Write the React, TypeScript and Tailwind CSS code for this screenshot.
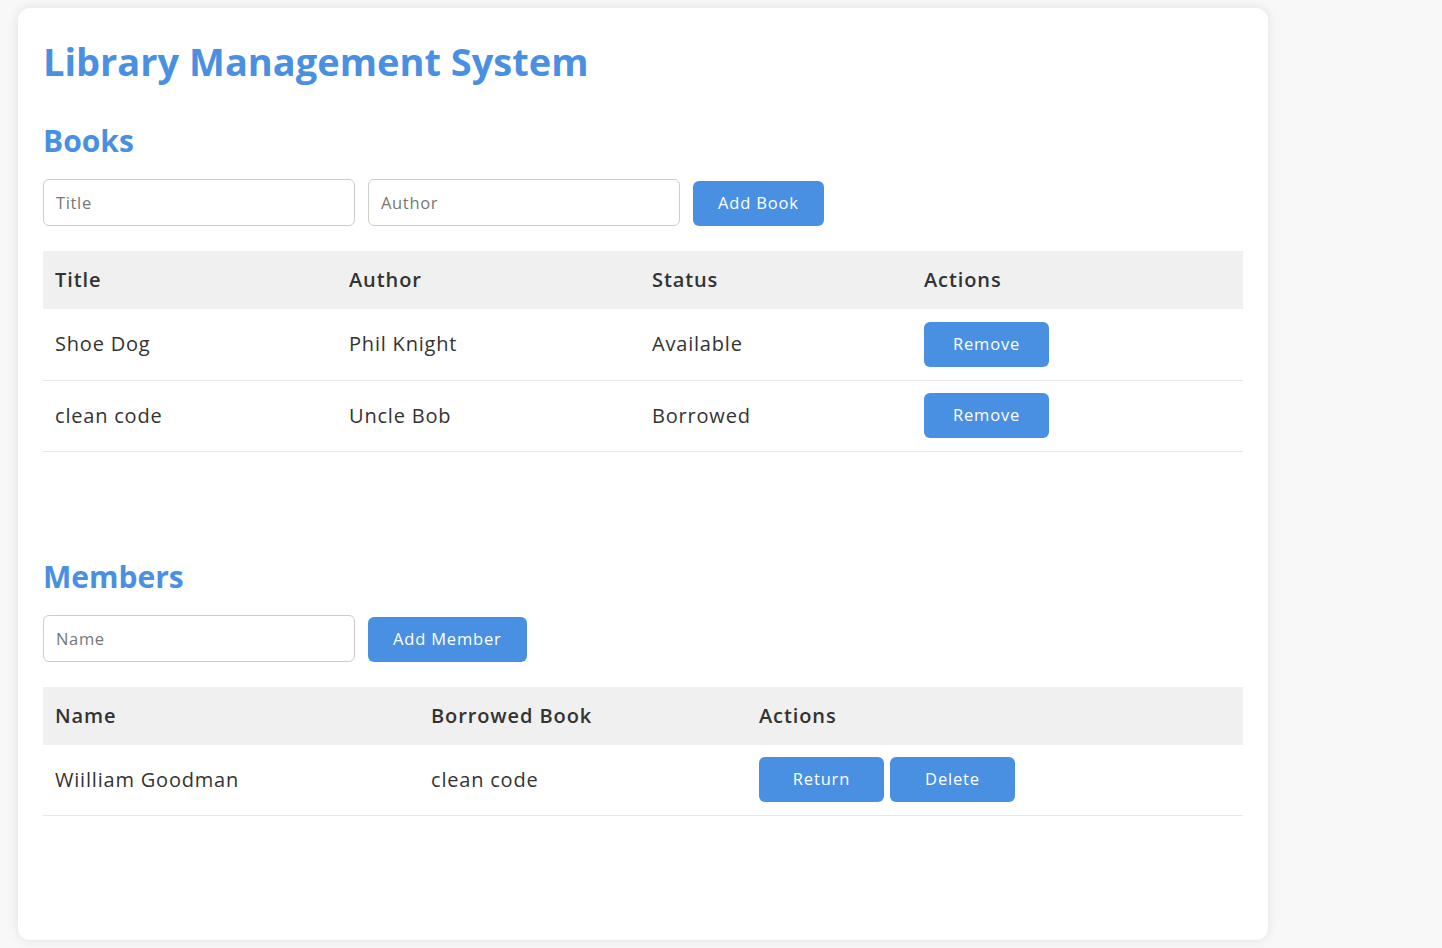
import React, { useState } from "react"

type Book = { title: string; author: string; status: 'Available' | 'Borrowed' }
type Member = { name: string; book: string }

const btn = "bg-[#4a90e2] text-white text-[16.5px] tracking-[0.05em] rounded-[6px] h-[45px] hover:bg-[#357abd]"
const field = "w-[312px] h-[47px] border border-[#ccc] rounded-[6px] px-[12px] text-[16.5px] tracking-[0.04em] placeholder:text-[#777] outline-none"

const App: React.FC = () => {
    const [books] = useState<Book[]>([
        { title: 'Shoe Dog', author: 'Phil Knight', status: 'Available' },
        { title: 'clean code', author: 'Uncle Bob', status: 'Borrowed' },
    ])
    const [members] = useState<Member[]>([
        { name: 'Wiilliam Goodman', book: 'clean code' },
    ])

    return (
        <div className="min-h-[948px] bg-[#f8f8f8] pt-[8px] pl-[18px] font-['Open_Sans',sans-serif] text-[#333] tracking-[0.05em]">
            <div className="w-[1250px] h-[932px] bg-white rounded-[12px] shadow-[0_0_12px_rgba(0,0,0,0.1)] px-[25px] pt-[30px]">
                <h1 className="text-[38px] leading-[46px] font-bold text-[#4a90e2] tracking-normal">Library Management System</h1>

                {/* books */}
                <h2 className="mt-[39px] text-[30px] leading-[36px] font-bold text-[#4a90e2] tracking-normal">Books</h2>
                <div className="mt-[20px] flex items-center gap-[13px]">
                    <input placeholder="Title" className={field} />
                    <input placeholder="Author" className={field} />
                    <button className={`${btn} px-[25px] mt-[2px]`}>Add Book</button>
                </div>
                <table className="mt-[25px] w-[1200px] border-collapse text-[20px]">
                    <thead>
                        <tr className="bg-[#f0f0f0] h-[58px]">
                            <th className="w-[294px] px-[12px] text-left font-semibold tracking-[0.045em]">Title</th>
                            <th className="w-[303px] px-[12px] text-left font-semibold tracking-[0.045em]">Author</th>
                            <th className="w-[272px] px-[12px] text-left font-semibold tracking-[0.045em]">Status</th>
                            <th className="px-[12px] text-left font-semibold tracking-[0.045em]">Actions</th>
                        </tr>
                    </thead>
                    <tbody>
                        {books.map((b) => (
                            <tr key={b.title} className="h-[71px] border-b border-[#e8e8e8]">
                                <td className="px-[12px]">{b.title}</td>
                                <td className="px-[12px]">{b.author}</td>
                                <td className="px-[12px]">{b.status}</td>
                                <td className="px-[12px]">
                                    <button className={`${btn} w-[125px]`}>Remove</button>
                                </td>
                            </tr>
                        ))}
                    </tbody>
                </table>

                {/* members */}
                <h2 className="mt-[107px] text-[30px] leading-[36px] font-bold text-[#4a90e2] tracking-normal">Members</h2>
                <div className="mt-[20px] flex items-center gap-[13px]">
                    <input placeholder="Name" className={field} />
                    <button className={`${btn} px-[25px] mt-[2px]`}>Add Member</button>
                </div>
                <table className="mt-[25px] w-[1200px] border-collapse text-[20px]">
                    <thead>
                        <tr className="bg-[#f0f0f0] h-[58px]">
                            <th className="w-[376px] px-[12px] text-left font-semibold tracking-[0.045em]">Name</th>
                            <th className="w-[328px] px-[12px] text-left font-semibold tracking-[0.045em]">Borrowed Book</th>
                            <th className="px-[12px] text-left font-semibold tracking-[0.045em]">Actions</th>
                        </tr>
                    </thead>
                    <tbody>
                        {members.map((m) => (
                            <tr key={m.name} className="h-[71px] border-b border-[#e8e8e8]">
                                <td className="px-[12px]">{m.name}</td>
                                <td className="px-[12px]">{m.book}</td>
                                <td className="px-[12px]">
                                    <div className="flex gap-[6px]">
                                        <button className={`${btn} w-[125px]`}>Return</button>
                                        <button className={`${btn} w-[125px]`}>Delete</button>
                                    </div>
                                </td>
                            </tr>
                        ))}
                    </tbody>
                </table>
            </div>
        </div>
    )
}

export default App
